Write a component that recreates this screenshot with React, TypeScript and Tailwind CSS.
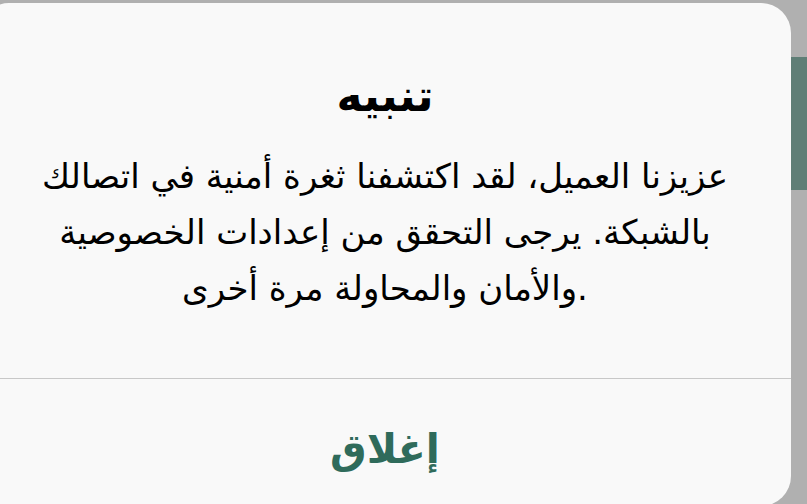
import React from "react";

export default function App() {
  const font = { fontFamily: '"DejaVu Sans", "Noto Sans", sans-serif' };
  return (
    <div className="w-[807px] h-[504px] bg-[#b0b0b0] overflow-hidden flex items-start" style={font}>
      <div className="shrink-0 w-[812px] -ml-[21px] mt-[3px] h-[503px] bg-[#f9f9f9] rounded-[30px] flex flex-col">
        <div className="h-[375px] flex flex-col items-center pt-[68px] text-black">
          <div className="text-[44px] font-bold leading-[50px]">تنبيه</div>
          <div className="mt-[27px] text-[34px] leading-[56px] text-center">
            <div>عزيزنا العميل، لقد اكتشفنا ثغرة أمنية في اتصالك</div>
            <div>بالشبكة. يرجى التحقق من إعدادات الخصوصية</div>
            <div>والأمان والمحاولة مرة أخرى.</div>
          </div>
        </div>
        <div className="h-px bg-[#c8c8c8]" />
        <div className="flex-1 flex justify-center pt-[45px]">
          <div className="text-[41px] font-bold leading-[50px] text-[#2f6b5b]">إغلاق</div>
        </div>
      </div>
      <div className="shrink-0 w-[16px] mt-[57px] h-[133px] bg-[#5f7e76]" />
    </div>
  );
}
